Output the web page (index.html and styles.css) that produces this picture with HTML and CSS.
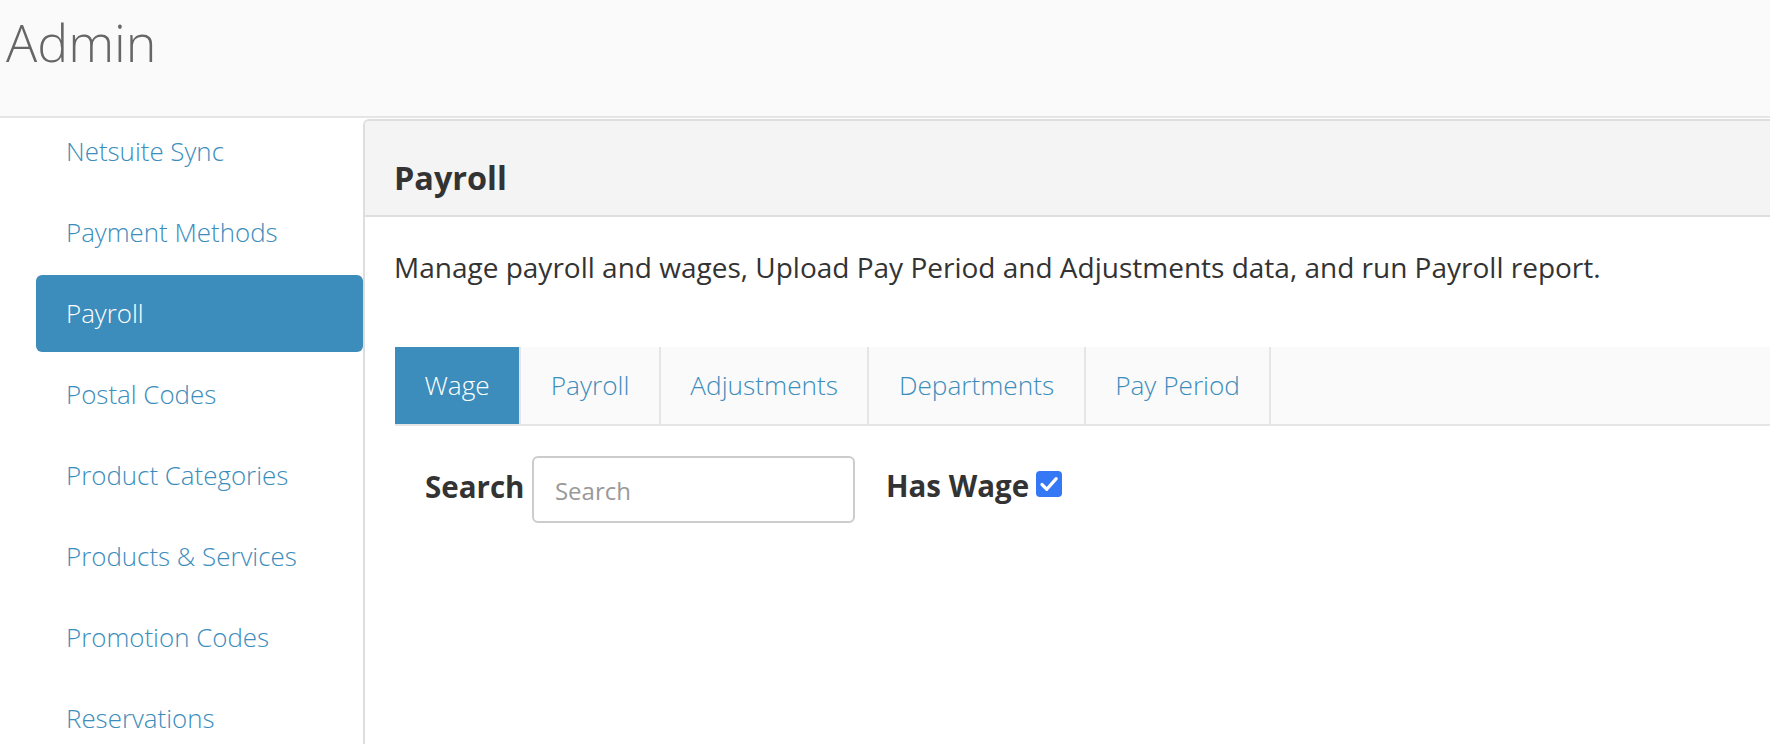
FILE: index.html
```html
<html>
<head>
  <meta charset="utf-8">
  <title>Admin - Payroll</title>
  <link rel="stylesheet" href="styles.css">
</head>
<body>
  <header class="topbar">
    <h1>Admin</h1>
  </header>

  <div class="layout">
    <aside class="sidebar">
      <ul class="side-nav">
        <li><a href="#">Netsuite Sync</a></li>
        <li><a href="#">Payment Methods</a></li>
        <li class="active"><a href="#">Payroll</a></li>
        <li><a href="#">Postal Codes</a></li>
        <li><a href="#">Product Categories</a></li>
        <li><a href="#">Products &amp; Services</a></li>
        <li><a href="#">Promotion Codes</a></li>
        <li><a href="#">Reservations</a></li>
      </ul>
    </aside>

    <main class="panel">
      <div class="panel-heading">
        <h3>Payroll</h3>
      </div>
      <div class="panel-body">
        <p class="intro">Manage payroll and wages, Upload Pay Period and Adjustments data, and run Payroll report.</p>

        <ul class="tabs">
          <li class="active"><a href="#">Wage</a></li>
          <li><a href="#">Payroll</a></li>
          <li><a href="#">Adjustments</a></li>
          <li><a href="#">Departments</a></li>
          <li><a href="#">Pay Period</a></li>
        </ul>

        <form class="filters">
          <label class="search-label" for="search">Search</label>
          <input id="search" class="search-input" type="text" placeholder="Search">
          <label class="wage-label">Has Wage</label>
          <span class="checkbox">
            <svg width="26" height="26" viewBox="0 0 26 26">
              <path d="M6 13.5 L10.8 18.3 L20.2 7.6" fill="none" stroke="#fff" stroke-width="3.2" stroke-linecap="round" stroke-linejoin="round"/>
            </svg>
          </span>
        </form>
      </div>
    </main>
  </div>
</body>
</html>
```

FILE: styles.css
```css
body {
  margin: 0;
  font-family: "Open Sans", "Liberation Sans", sans-serif;
  color: #333;
  background: #fff;
  height: 100vh;
  overflow: hidden;
  display: flex;
  flex-direction: column;
}
a {
  text-decoration: none;
}

/* top bar */
.topbar {
  height: 118px;
  box-sizing: border-box;
  background: #fafafa;
  border-bottom: 2px solid #e5e5e5;
  position: relative;
  z-index: 1;
}
.topbar h1 {
  margin: 0;
  padding: 16px 0 0 6px;
  font-size: 52px;
  font-weight: 300;
  line-height: 52px;
  color: #666;
}

.layout {
  flex: 1;
  display: flex;
  min-height: 0;
}

/* sidebar */
.sidebar {
  width: 363px;
  flex-shrink: 0;
  box-sizing: border-box;
  padding-left: 36px;
}
.side-nav {
  list-style: none;
  margin: -5px 0 0;
  padding: 0;
}
.side-nav li a {
  display: block;
  height: 77px;
  line-height: 77px;
  margin-bottom: 4px;
  padding-left: 30px;
  border-radius: 6px;
  font-size: 25.9px;
  font-weight: 300;
  color: #3c8dbc;
}
.side-nav li.active a {
  background: #3c8dbc;
  color: #fff;
}

/* panel */
.panel {
  flex: 1;
  margin-top: 1px;
  border-top: 2px solid #dedede;
  border-left: 2px solid #dedede;
  border-top-left-radius: 6px;
}
.panel-heading {
  background: #f4f4f4;
  border-bottom: 2px solid #dedede;
  border-top-left-radius: 4px;
  padding: 39px 29px 19px;
}
.panel-heading h3 {
  margin: 0;
  font-size: 32.4px;
  font-weight: 700;
  line-height: 35.6px;
  color: #333;
}
.panel-body {
  padding: 30px 0 0 29px;
}
.intro {
  margin: 0;
  font-size: 28px;
  line-height: 40px;
}

/* tabs */
.tabs {
  list-style: none;
  margin: 60px 0 0 1px;
  padding: 0;
  display: flex;
  background: #fafafa;
  border-bottom: 2px solid #e5e5e5;
}
.tabs li a {
  display: block;
  padding: 0 29.5px;
  line-height: 77px;
  font-size: 26.2px;
  font-weight: 300;
  color: #3c8dbc;
  border-right: 2px solid #e5e5e5;
}
.tabs li.active a {
  background: #3c8dbc;
  color: #fff;
}

/* filter row */
.filters {
  margin: 30px 0 0;
  padding-left: 31px;
  display: flex;
  align-items: flex-start;
}
.search-label,
.wage-label {
  font-size: 29.5px;
  font-weight: 700;
  line-height: 36px;
  color: #333;
}
.search-label {
  margin-top: 13px;
}
.search-input {
  margin-left: 7.5px;
  width: 323px;
  height: 67px;
  box-sizing: border-box;
  border: 2px solid #ccc;
  border-radius: 6px;
  padding: 2px 21px 0;
  font-family: "Open Sans", sans-serif;
  font-size: 24px;
  color: #555;
  outline: none;
}
.search-input::placeholder {
  color: #999;
}
.wage-label {
  margin: 12px 0 0 31px;
}
.checkbox {
  margin: 15.4px 0 0 6.4px;
  width: 26px;
  height: 26px;
  border-radius: 4px;
  background: #3478f6;
  display: flex;
}
```
